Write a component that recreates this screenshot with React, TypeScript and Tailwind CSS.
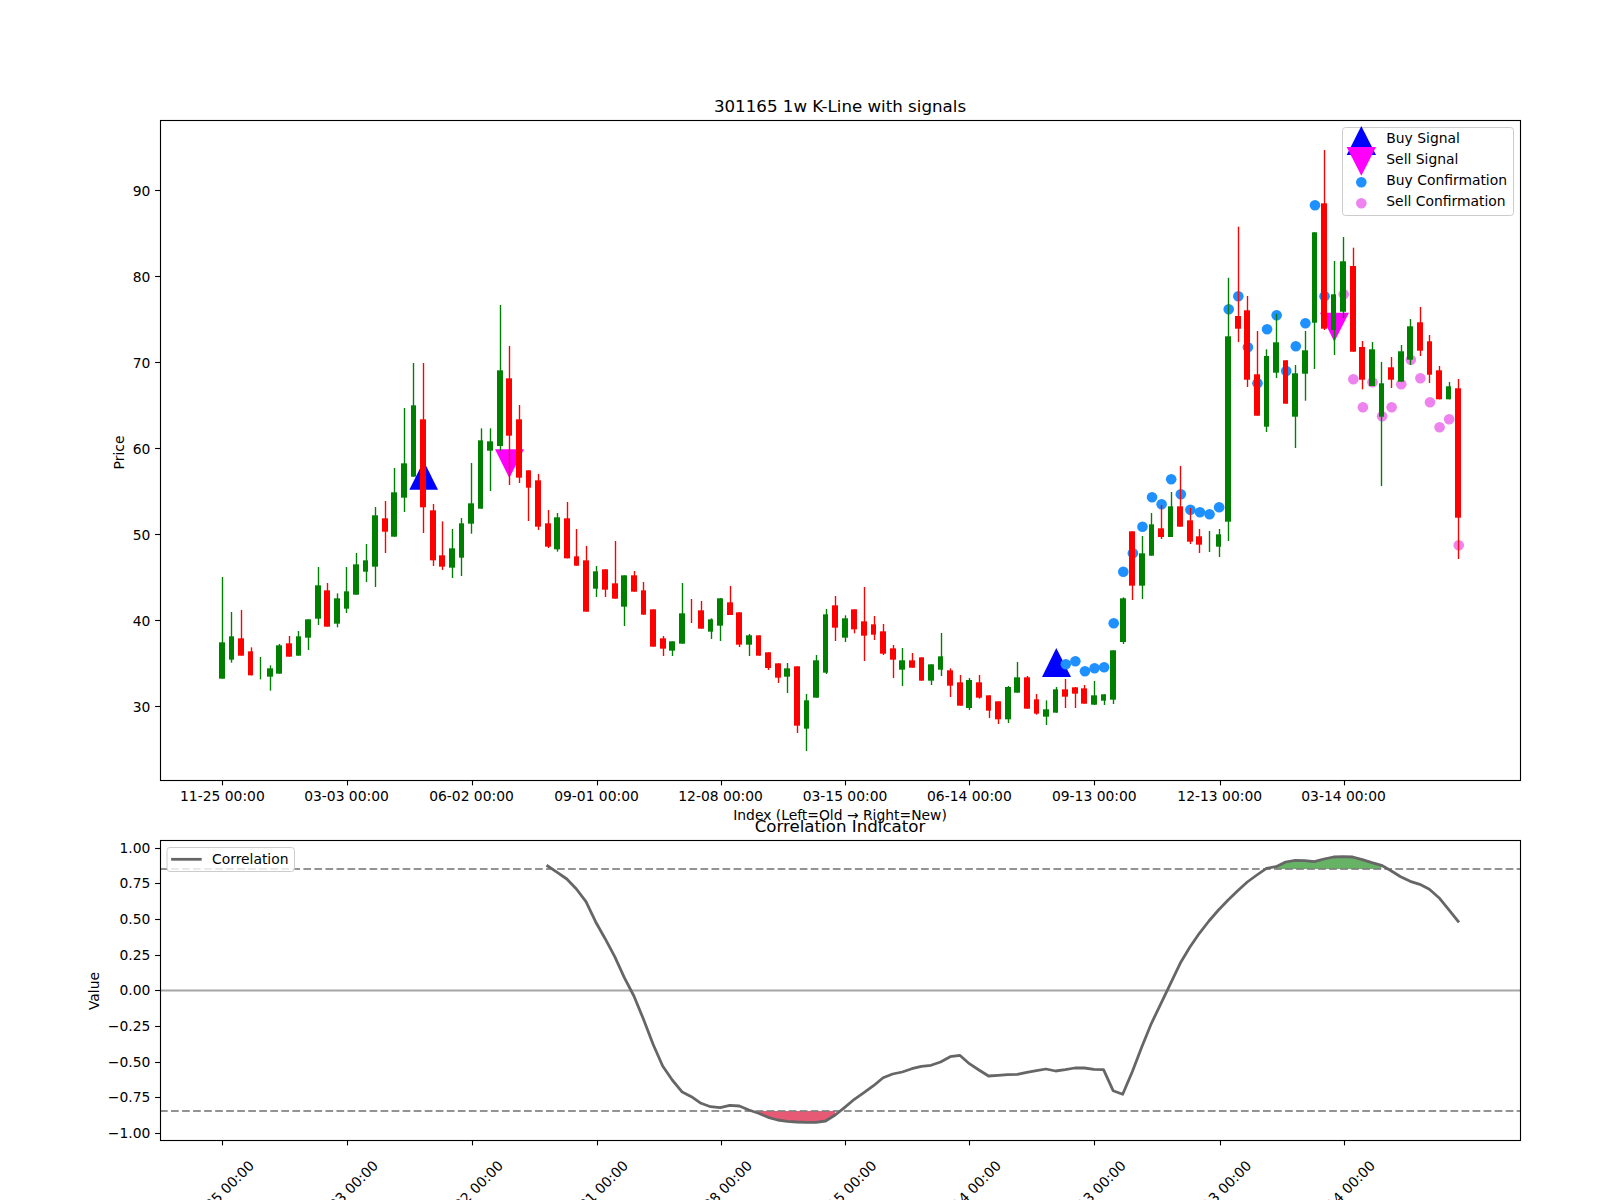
import React from "react";

type Candle = [string, number, number, number, number];

// color, wick top, wick bottom, body top, body bottom (y read off the picture)
const rowsA: Candle[] = [
  ["g", 711, 1016, 907, 1016], ["g", 816, 968, 889, 959], ["r", 810, 947, 895, 947], ["r", 922, 1006, 934, 1006],
  ["g", 951, 1018, 0, 0], ["g", 976, 1052, 985, 1010], ["g", 912, 1001, 916, 1001], ["r", 888, 950, 910, 950],
  ["g", 873, 947, 889, 947], ["g", 838, 930, 838, 893], ["g", 681, 855, 736, 836], ["r", 729, 860, 751, 860],
  ["g", 760, 862, 775, 851], ["g", 681, 819, 754, 806], ["g", 639, 764, 673, 764], ["g", 612, 726, 661, 695],
  ["g", 501, 741, 526, 680], ["r", 483, 639, 535, 575], ["g", 384, 590, 457, 590], ["g", 204, 516, 370, 473],
  ["g", 69, 410, 196, 410], ["r", 69, 579, 238, 502], ["r", 492, 678, 511, 661], ["r", 544, 690, 646, 680],
  ["g", 567, 714, 625, 683], ["g", 534, 708, 550, 653], ["g", 369, 581, 490, 551], ["g", 265, 506, 301, 506],
  ["g", 265, 453, 304, 332], ["g", -105, 332, 91, 318], ["r", 18, 435, 115, 287], ["r", 195, 429, 238, 413],
  ["r", 391, 543, 391, 443], ["r", 402, 570, 421, 560], ["r", 510, 624, 550, 620], ["g", 519, 635, 532, 628],
  ["r", 486, 655, 535, 655], ["r", 567, 677, 649, 677], ["r", 618, 815, 661, 815], ["g", 678, 771, 694, 746],
  ["r", 687, 771, 688, 749], ["r", 603, 776, 730, 776], ["g", 706, 858, 706, 800], ["r", 693, 755, 706, 755],
  ["r", 726, 824, 751, 824], ["r", 808, 920, 808, 920], ["r", 888, 948, 895, 926], ["g", 904, 948, 904, 932],
  ["g", 729, 911, 820, 911], ["r", 777, 849, 0, 0], ["r", 783, 866, 811, 866], ["g", 835, 897, 838, 875],
  ["g", 774, 903, 775, 857], ["r", 738, 825, 787, 825], ["r", 817, 921, 817, 914], ["g", 882, 948, 886, 914],
  ["r", 886, 947, 886, 947], ["r", 937, 990, 937, 984], ["r", 970, 1029, 970, 1013], ["g", 969, 1059, 985, 1010],
  ["r", 979, 1179, 979, 1157], ["g", 1062, 1233, 1081, 1166], ["g", 945, 1073, 961, 1073], ["g", 807, 1002, 823, 998],
  ["r", 768, 903, 796, 863], ["g", 826, 906, 835, 893], ["r", 808, 880, 808, 868], ["r", 741, 963, 844, 887],
  ["r", 828, 900, 853, 884], ["r", 852, 945, 874, 941], ["r", 915, 1014, 925, 959], ["g", 924, 1038, 961, 989],
  ["r", 939, 983, 961, 983], ["r", 952, 1022, 952, 1022], ["g", 973, 1035, 973, 1022],
];

const rowsB: Candle[] = [
  ["g", 579, 708, 649, 689], ["r", 685, 771, 691, 737], ["r", 705, 797, 727, 797], ["g", 714, 810, 720, 804],
  ["r", 705, 776, 727, 773], ["r", 766, 834, 766, 812], ["r", 784, 852, 784, 838], ["g", 738, 849, 741, 838],
  ["g", 666, 758, 712, 758], ["r", 708, 806, 712, 806], ["r", 762, 824, 778, 821], ["g", 781, 855, 808, 830],
  ["g", 741, 818, 748, 818], ["r", 717, 804, 748, 770], ["r", 741, 804, 742, 761], ["r", 735, 791, 745, 791],
  ["g", 723, 795, 766, 794], ["g", 763, 795, 763, 782], ["g", 631, 792, 631, 779], ["g", 472, 612, 475, 606],
  ["r", 274, 480, 274, 437], ["g", 288, 477, 340, 437], ["g", 219, 347, 253, 347], ["r", 195, 297, 265, 291],
  ["g", 156, 291, 199, 291], ["r", 78, 260, 199, 260], ["r", 204, 312, 241, 305], ["r", 267, 339, 289, 314],
  ["g", 273, 336, 0, 0], ["g", 267, 351, 283, 320],
];

const rowsC: Candle[] = [
  ["g", 277.7, 541, 336.3, 521.7], ["r", 226.7, 342, 316, 328.7], ["r", 296, 387, 310.3, 379.7],
  ["r", 331, 415.7, 374.3, 415.7], ["g", 349.3, 432, 356, 426.7], ["g", 313.7, 378, 342.3, 372.7],
  ["r", 360.3, 403.7, 360.3, 403.7], ["g", 365, 448, 373.3, 416.7], ["g", 331, 400.7, 350.3, 373.7],
  ["g", 232.3, 369, 232.3, 322.7], ["r", 150, 330, 203.3, 328.7], ["g", 261, 355, 294.3, 330],
  ["g", 237, 318, 261.3, 311.7], ["r", 247.7, 351.7, 266, 351.7], ["r", 341, 389.3, 347, 379.7],
  ["g", 342, 386, 349.3, 386], ["g", 362, 486, 383.3, 416.7], ["r", 357, 388, 367.3, 379.7],
  ["g", 345, 381.7, 351.3, 381.7], ["g", 319, 365, 326.3, 359.7], ["r", 307, 356, 322.3, 350.7],
  ["r", 335, 383, 341.3, 374.7], ["r", 366, 399.3, 370.3, 399.3], ["g", 382, 399.3, 386.3, 399.3],
  ["r", 379, 559, 388.3, 517.7],
];

const rebase = (rows: Candle[], top: number): Candle[] =>
  rows.map(([c, a, b, d, e]) => [c, top + a / 3, top + b / 3, d ? top + d / 3 : 0, e ? top + e / 3 : 0]);

const candles: Candle[] = [...rebase(rowsA, 340), ...rebase(rowsB, 440), ...rowsC];

const indexX = (i: number) => 221.8 + 9.584 * i;

const buyDots: [number, number][] = [
  [88, 664.3], [89, 661.3], [90, 671.3], [91, 668.3], [92, 667.3], [93, 623.3], [94, 571.7], [95, 553.3], [96, 526.7],
  [97, 497.3], [98, 504.3], [99, 479.3], [100, 494.3], [101, 509.7], [102, 512.3], [103, 514.3], [104, 507.3],
  [105, 309.3], [106, 296.3], [107, 347.3], [108, 383.3], [109, 329.3], [110, 315.3], [111, 371], [112, 346.3],
  [113, 323.3], [114, 205.3], [115, 296.3],
];

const sellDots: [number, number][] = [
  [117, 294.3], [118, 379.3], [119, 407.3], [120, 382.3], [121, 416.3], [122, 407.3], [123, 384.3], [124, 359.7],
  [125, 378.3], [126, 402.3], [127, 427.3], [128, 419.3], [129, 545.3],
];

// correlation line from index 34 on, y in page pixels
const corrY = [
  866, 872.3, 879, 889, 901.7, 921.7, 938.7, 956.7, 977.7, 996, 1019.3, 1044.3, 1066, 1080, 1091.7, 1096.7, 1103.3,
  1106.7, 1107.7, 1105.3, 1106, 1110, 1113.3, 1117.3, 1120, 1121.3, 1122, 1122.3, 1122.3, 1121, 1115, 1107.3, 1099.3,
  1092.7, 1085.7, 1077.7, 1074, 1072, 1068.7, 1066.3, 1065.3, 1062, 1056.7, 1055.3, 1063.7, 1070, 1076, 1075.3, 1074.7,
  1074.3, 1072.3, 1070.7, 1069, 1071, 1069.7, 1068, 1068, 1069.3, 1069.7, 1090.7, 1094.3, 1071.7, 1046.7, 1023.3,
  1003.3, 983.3, 963.3, 947.3, 933.3, 921, 910, 900, 890.7, 882, 875, 868.3, 866.7, 862, 860.3, 860.7, 861.7, 859, 857,
  856.7, 857, 859.7, 862.7, 865.3, 870.7, 876.7, 881.3, 884.3, 889.3, 897.7, 909.3, 921.3,
];

const corr = corrY.map((y, n) => ({ x: indexX(n + 34), y }));
const corrPoints = corr.map((p) => `${p.x},${p.y}`).join(" ");

const band = (from: number, to: number, y: number) => {
  const part = corr.slice(from - 34, to - 34 + 1);
  return [...part.map((p) => `${p.x},${p.y}`), `${part[part.length - 1].x},${y}`, `${part[0].x},${y}`].join(" ");
};

const xTicks = [
  { x: 222.4, label: "11-25 00:00" },
  { x: 346.5, label: "03-03 00:00" },
  { x: 471.5, label: "06-02 00:00" },
  { x: 596.5, label: "09-01 00:00" },
  { x: 720.6, label: "12-08 00:00" },
  { x: 845, label: "03-15 00:00" },
  { x: 969.4, label: "06-14 00:00" },
  { x: 1094.3, label: "09-13 00:00" },
  { x: 1219.7, label: "12-13 00:00" },
  { x: 1343.6, label: "03-14 00:00" },
];

const priceTicks = [30, 40, 50, 60, 70, 80, 90].map((p) => ({ y: 706.3 - (p - 30) * 8.6, label: String(p) }));

const corrTicks = [
  "1.00", "0.75", "0.50", "0.25", "0.00", "\u22120.25", "\u22120.50", "\u22120.75", "\u22121.00",
].map((label, n) => ({ y: 847.8 + n * 35.62, label }));

function CandleMark({ c, i }: { c: Candle; i: number }) {
  const [tone, top, bottom, bodyTop, bodyBottom] = c;
  const color = tone === "g" ? "#008000" : "#ff0000";
  const x = indexX(i);
  const left = Math.round(x - 2.875);
  const right = Math.round(x + 2.875);
  return (
    <g>
      <line x1={Math.round(x) + 0.5} x2={Math.round(x) + 0.5} y1={top} y2={bottom} stroke={color} strokeWidth={1.39} />
      {bodyBottom > bodyTop && <rect x={left} y={bodyTop} width={right - left} height={bodyBottom - bodyTop} fill={color} />}
    </g>
  );
}

export default function App() {
  return (
    <div className="w-[1600px] h-[1200px] overflow-hidden bg-white">
      <svg
        width="1600"
        height="1200"
        viewBox="0 0 1600 1200"
        className="block font-['DejaVu_Sans',sans-serif] text-[13.89px]"
        fill="#000"
      >
        {/* price panel */}
        <text x="840" y="111.7" textAnchor="middle" fontSize="16.67">301165 1w K-Line with signals</text>

        <polygon points="409.3,489.7 438,489.7 423.7,461" fill="#0000ff" />
        <polygon points="1042,677 1071,677 1056.3,648" fill="#0000ff" />
        <polygon points="495,449.3 524,449.3 509.3,478" fill="#ff00ff" />
        <polygon points="1320,312.7 1349,312.7 1334.3,341.7" fill="#ff00ff" />

        {buyDots.map(([i, y]) => (
          <circle key={i} cx={indexX(i) + 0.6} cy={y} r="5.3" fill="#1e90ff" />
        ))}
        {sellDots.map(([i, y]) => (
          <circle key={i} cx={indexX(i) + 0.6} cy={y} r="5.3" fill="#ee82ee" />
        ))}

        {candles.map((c, i) => (
          <CandleMark key={i} c={c} i={i} />
        ))}

        <rect x="160.5" y="120.5" width="1360" height="660" fill="none" stroke="#000" strokeWidth="1.11" />

        {priceTicks.map((t) => (
          <g key={t.label}>
            <line x1="155.1" x2="160" y1={Math.round(t.y) + 0.5} y2={Math.round(t.y) + 0.5} stroke="#000" strokeWidth="1.11" />
            <text x="150.3" y={t.y + 5.8} textAnchor="end">{t.label}</text>
          </g>
        ))}
        {xTicks.map((t) => (
          <g key={t.label}>
            <line x1={Math.round(t.x) + 0.5} x2={Math.round(t.x) + 0.5} y1="781" y2="785.4" stroke="#000" strokeWidth="1.11" />
            <text x={t.x} y="801" textAnchor="middle">{t.label}</text>
          </g>
        ))}
        <text x="840" y="820" textAnchor="middle">Index (Left=Old → Right=New)</text>
        <text transform="translate(124 452.5) rotate(-90)" textAnchor="middle">Price</text>

        {/* legend of the price panel */}
        <rect x="1342.5" y="127.5" width="171" height="88" rx="3" fill="#ffffff" fillOpacity="0.8" stroke="#cccccc" />
        <polygon points="1346.7,155 1376,155 1361.3,126" fill="#0000ff" />
        <polygon points="1346.7,147 1376,147 1361.3,175.7" fill="#ff00ff" />
        <circle cx="1361.3" cy="182.3" r="5.3" fill="#1e90ff" />
        <circle cx="1361.3" cy="203.3" r="5.3" fill="#ee82ee" />
        <text x="1386.3" y="143.3">Buy Signal</text>
        <text x="1386.3" y="164.3">Sell Signal</text>
        <text x="1386.3" y="185.3">Buy Confirmation</text>
        <text x="1386.3" y="206.3">Sell Confirmation</text>

        {/* correlation panel */}
        <text x="840" y="831.7" textAnchor="middle" fontSize="16.67">Correlation Indicator</text>
        <polygon points={band(56, 64, 1111)} fill="#dc143c" fillOpacity="0.7" />
        <polygon points={band(110, 121, 869)} fill="#008000" fillOpacity="0.6" />
        <line x1="160" x2="1520" y1="869" y2="869" stroke="#808080" strokeOpacity="0.85" strokeWidth="2.08" strokeDasharray="7.7 3.33" />
        <line x1="160" x2="1520" y1="1111" y2="1111" stroke="#808080" strokeOpacity="0.85" strokeWidth="2.08" strokeDasharray="7.7 3.33" />
        <line x1="160" x2="1520" y1="990.5" y2="990.5" stroke="#808080" strokeOpacity="0.7" strokeWidth="2" />
        <polyline points={corrPoints} fill="none" stroke="#666666" strokeWidth="2.78" strokeLinejoin="round" strokeLinecap="square" />

        <rect x="160.5" y="840.5" width="1360" height="300" fill="none" stroke="#000" strokeWidth="1.11" />

        {corrTicks.map((t) => (
          <g key={t.label}>
            <line x1="155.1" x2="160" y1={Math.round(t.y) + 0.5} y2={Math.round(t.y) + 0.5} stroke="#000" strokeWidth="1.11" />
            <text x="150.3" y={t.y + 5} textAnchor="end">{t.label}</text>
          </g>
        ))}
        {xTicks.map((t) => (
          <g key={t.label}>
            <line x1={Math.round(t.x) + 0.5} x2={Math.round(t.x) + 0.5} y1="1141" y2="1145.4" stroke="#000" strokeWidth="1.11" />
            <text transform={`translate(${t.x - 1} 1193) rotate(-45)`} y="5" textAnchor="middle">{t.label}</text>
          </g>
        ))}
        <text transform="translate(99 991) rotate(-90)" textAnchor="middle">Value</text>

        {/* legend of the correlation panel */}
        <rect x="167" y="847.5" width="127.5" height="24" rx="3" fill="#ffffff" fillOpacity="0.8" stroke="#cccccc" />
        <line x1="172.5" x2="200.3" y1="859.3" y2="859.3" stroke="#666666" strokeWidth="2.78" strokeLinecap="square" />
        <text x="212" y="864.3">Correlation</text>
      </svg>
    </div>
  );
}
